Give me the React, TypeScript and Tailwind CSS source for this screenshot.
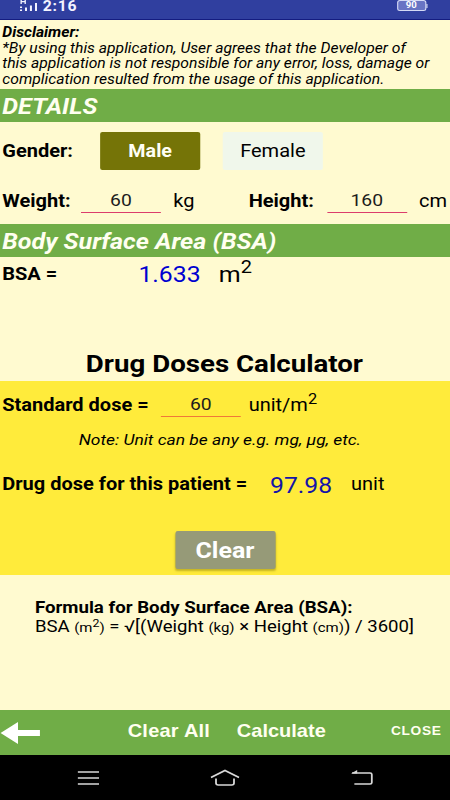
import type { ReactNode } from 'react';

function SectionHeader({ children }: { children: ReactNode }) {
  return (
    <h2 className="flex h-[33px] items-center bg-[#70ad47] pt-[2px] pl-[2px] text-[22.3px] leading-none font-bold text-[#fffff0] italic">
      {children}
    </h2>
  );
}

function Field({ value, accent = 'border-[#dc3c6c]' }: { value: string; accent?: string }) {
  return (
    <div className={`h-[26px] w-[71px] shrink-0 border-b pt-[3px] text-center text-[17.2px] leading-[20px] text-[#1c1c1c] ${accent}`}>
      {value}
    </div>
  );
}

function Sup({ className }: { className: string }) {
  return <span className={`relative leading-none ${className}`}>2</span>;
}

function StatusBar() {
  return (
    <header className="flex h-[20px] shrink-0 border-b border-[#141c80] bg-[#303f9f] text-white">
      <svg className="ml-[17px] h-[12px] w-[19px] shrink-0" viewBox="0 0 19 12" fill="none" stroke="#f2f2ff">
        <path d="M1.8 0v4M5.4 0v4M1.8 1.7h3.6" strokeWidth="1.2" />
        <path d="M1.7 6.5v1.5M1.7 9.5V11M6.1 7.5V11M10.5 5.5V11M15 3v8" strokeWidth="1.8" />
      </svg>
      <span className="ml-[2px] text-[14px] leading-[13px] font-bold tracking-[0.7px] text-[#f4f4ff]">2:16</span>
      <div className="mr-[20px] ml-auto flex h-[11px] items-center">
        <div className="flex h-[11px] w-[26px] items-center justify-center rounded-[2.5px] border border-[#d5daf5] bg-[#6874c4] text-[8.5px] leading-none font-bold">
          90
        </div>
        <div className="h-[4px] w-[1.5px] bg-[#d5daf5]" />
      </div>
    </header>
  );
}

function Disclaimer() {
  return (
    <section className="h-[69px] pt-[5px] pl-[2px] text-[13.95px] leading-[15.56px] whitespace-nowrap italic">
      <div className="font-bold">Disclaimer:</div>
      <div>*By using this application, User agrees that the Developer of</div>
      <div>this application is not responsible for any error, loss, damage or</div>
      <div>complication resulted from the usage of this application.</div>
    </section>
  );
}

function Details() {
  return (
    <section className="h-[102px] pt-[10px] pl-[2px]">
      <div className="flex h-[38px] items-center text-[17.8px]">
        <span className="w-[87px] pt-px font-bold">Gender:</span>
        <button className="h-[38px] w-[89px] rounded-[2px] bg-[#757407] pt-px text-[17.5px] font-bold text-[#fffff4]">Male</button>
        <button className="ml-[20px] h-[38px] w-[89px] rounded-[2px] bg-[#f0f7eb] pt-px">Female</button>
      </div>
      <div className="mt-[17px] flex items-start text-[17.8px] leading-[27px] whitespace-nowrap">
        <span className="w-[70px] shrink-0 font-bold">Weight:</span>
        <Field value="60" />
        <span className="ml-[11px] w-[67px] shrink-0">kg</span>
        <span className="w-[69.5px] shrink-0 font-bold">Height:</span>
        <Field value="160" />
        <span className="ml-[11px]">cm</span>
      </div>
    </section>
  );
}

function SurfaceArea() {
  return (
    <section className="h-[124px] pl-[2px]">
      <div className="flex h-[34px] items-start pt-[4px] leading-[26px]">
        <span className="w-[121px] text-[17.8px] font-bold">BSA =</span>
        <span className="w-[71.5px] pt-px text-[22px] text-[#0000d0]">1.633</span>
        <span className="text-[22.2px]">
          m<Sup className="-top-[9px] text-[17.8px]" />
        </span>
      </div>
      <h1 className="mt-[60px] pr-[3px] text-center text-[24.6px] leading-[26px] font-bold">Drug Doses Calculator</h1>
    </section>
  );
}

function DoseCalculator() {
  return (
    <section className="h-[194px] bg-[#ffeb3b] pt-[10px] pl-[2px] text-[17.8px] whitespace-nowrap">
      <div className="flex leading-[28px]">
        <span className="w-[141px] font-bold">Standard dose =</span>
        <Field value="60" accent="border-[#f07838]" />
        <span className="ml-[7px]">
          unit/m<Sup className="-top-[7px] text-[14.5px]" />
        </span>
      </div>
      <p className="mt-[13px] ml-[68px] text-[15.5px] leading-[16px] italic">Note: Unit can be any e.g. mg, µg, etc.</p>
      <div className="mt-[22px] flex h-[28px] leading-[28px]">
        <span className="w-[238px] font-bold">Drug dose for this patient =</span>
        <span className="w-[72px] pt-[2px] text-[22px] text-[#1414a8]">97.98</span>
        <span>unit</span>
      </div>
      <button className="mt-[33px] ml-[153.5px] flex h-[38px] w-[89px] items-center justify-center rounded-[2px] bg-[#969a78] pt-[2px] text-[22.2px] font-bold text-white shadow-[0_2px_2px_rgba(110,100,0,0.4)]">
        Clear
      </button>
    </section>
  );
}

function Formula() {
  return (
    <section className="h-[135px] pt-[23px] pl-[31px] text-[16.6px] leading-[19px] whitespace-nowrap">
      <div className="font-bold">Formula for Body Surface Area (BSA):</div>
      <div className="text-[16.5px]">
        BSA <span className="text-[13.3px]">(m<Sup className="-top-[5px] text-[11px]" />)</span> = √[(Weight{' '}
        <span className="text-[13.3px]">(kg)</span> × Height <span className="text-[13.3px]">(cm)</span>) / 3600]
      </div>
    </section>
  );
}

function Toolbar() {
  return (
    <nav className="flex h-[45px] items-center bg-[#70ad47] font-['Liberation_Sans',sans-serif] text-[17.8px] font-bold text-[#fffff0]">
      <svg className="h-[22px] w-[36px]" viewBox="0 0 36 22" fill="#fff">
        <path d="M0.5 11 16 0v8h19.5v6H16v8z" />
      </svg>
      <span className="ml-[77.5px] w-[97px] pb-[3px] tracking-[0.2px]">Clear All</span>
      <span className="w-[137px] pb-[3px]">Calculate</span>
      <span className="pb-[2px] text-[12.2px] tracking-[0.6px]">CLOSE</span>
    </nav>
  );
}

function SystemNav() {
  return (
    <footer className="flex h-[45px] items-center bg-black">
      <svg className="ml-[69px] h-[16px] w-[19px]" viewBox="0 0 19 16" stroke="#d8d8d8" strokeWidth="1.7">
        <path d="M0 2h19M0 8h19M0 14h19" />
      </svg>
      <svg className="ml-[99px] h-[18px] w-[26px]" viewBox="0 0 26 18" fill="none" stroke="#d8d8d8" strokeWidth="1.6">
        <path d="M0.5 8.5 13 1.5l12.5 7M5 9.5V14q0 2 2 2h12q2 0 2-2V9.5" />
      </svg>
      <svg className="ml-[99px] h-[16px] w-[20px]" viewBox="0 0 20 16" fill="none" stroke="#d8d8d8" strokeWidth="1.6">
        <path d="M1 3h16q1.5 0 1.5 1.5v8q0 1.5-1.5 1.5H3" />
        <path d="M0 3.5 5.5 0v3.5z" fill="#d8d8d8" stroke="none" />
      </svg>
    </footer>
  );
}

export default function App() {
  return (
    <div className="h-[800px] w-[450px] overflow-hidden bg-[#fffad0]">
      {/* 400px wide layout, stretched to fill the window */}
      <div className="flex h-[800px] w-[400px] origin-top-left scale-x-[1.125] flex-col bg-[#fffad0] font-[Roboto,sans-serif] text-black">
        <StatusBar />
        <Disclaimer />
        <SectionHeader>DETAILS</SectionHeader>
        <Details />
        <SectionHeader>Body Surface Area (BSA)</SectionHeader>
        <SurfaceArea />
        <DoseCalculator />
        <Formula />
        <Toolbar />
        <SystemNav />
      </div>
    </div>
  );
}
